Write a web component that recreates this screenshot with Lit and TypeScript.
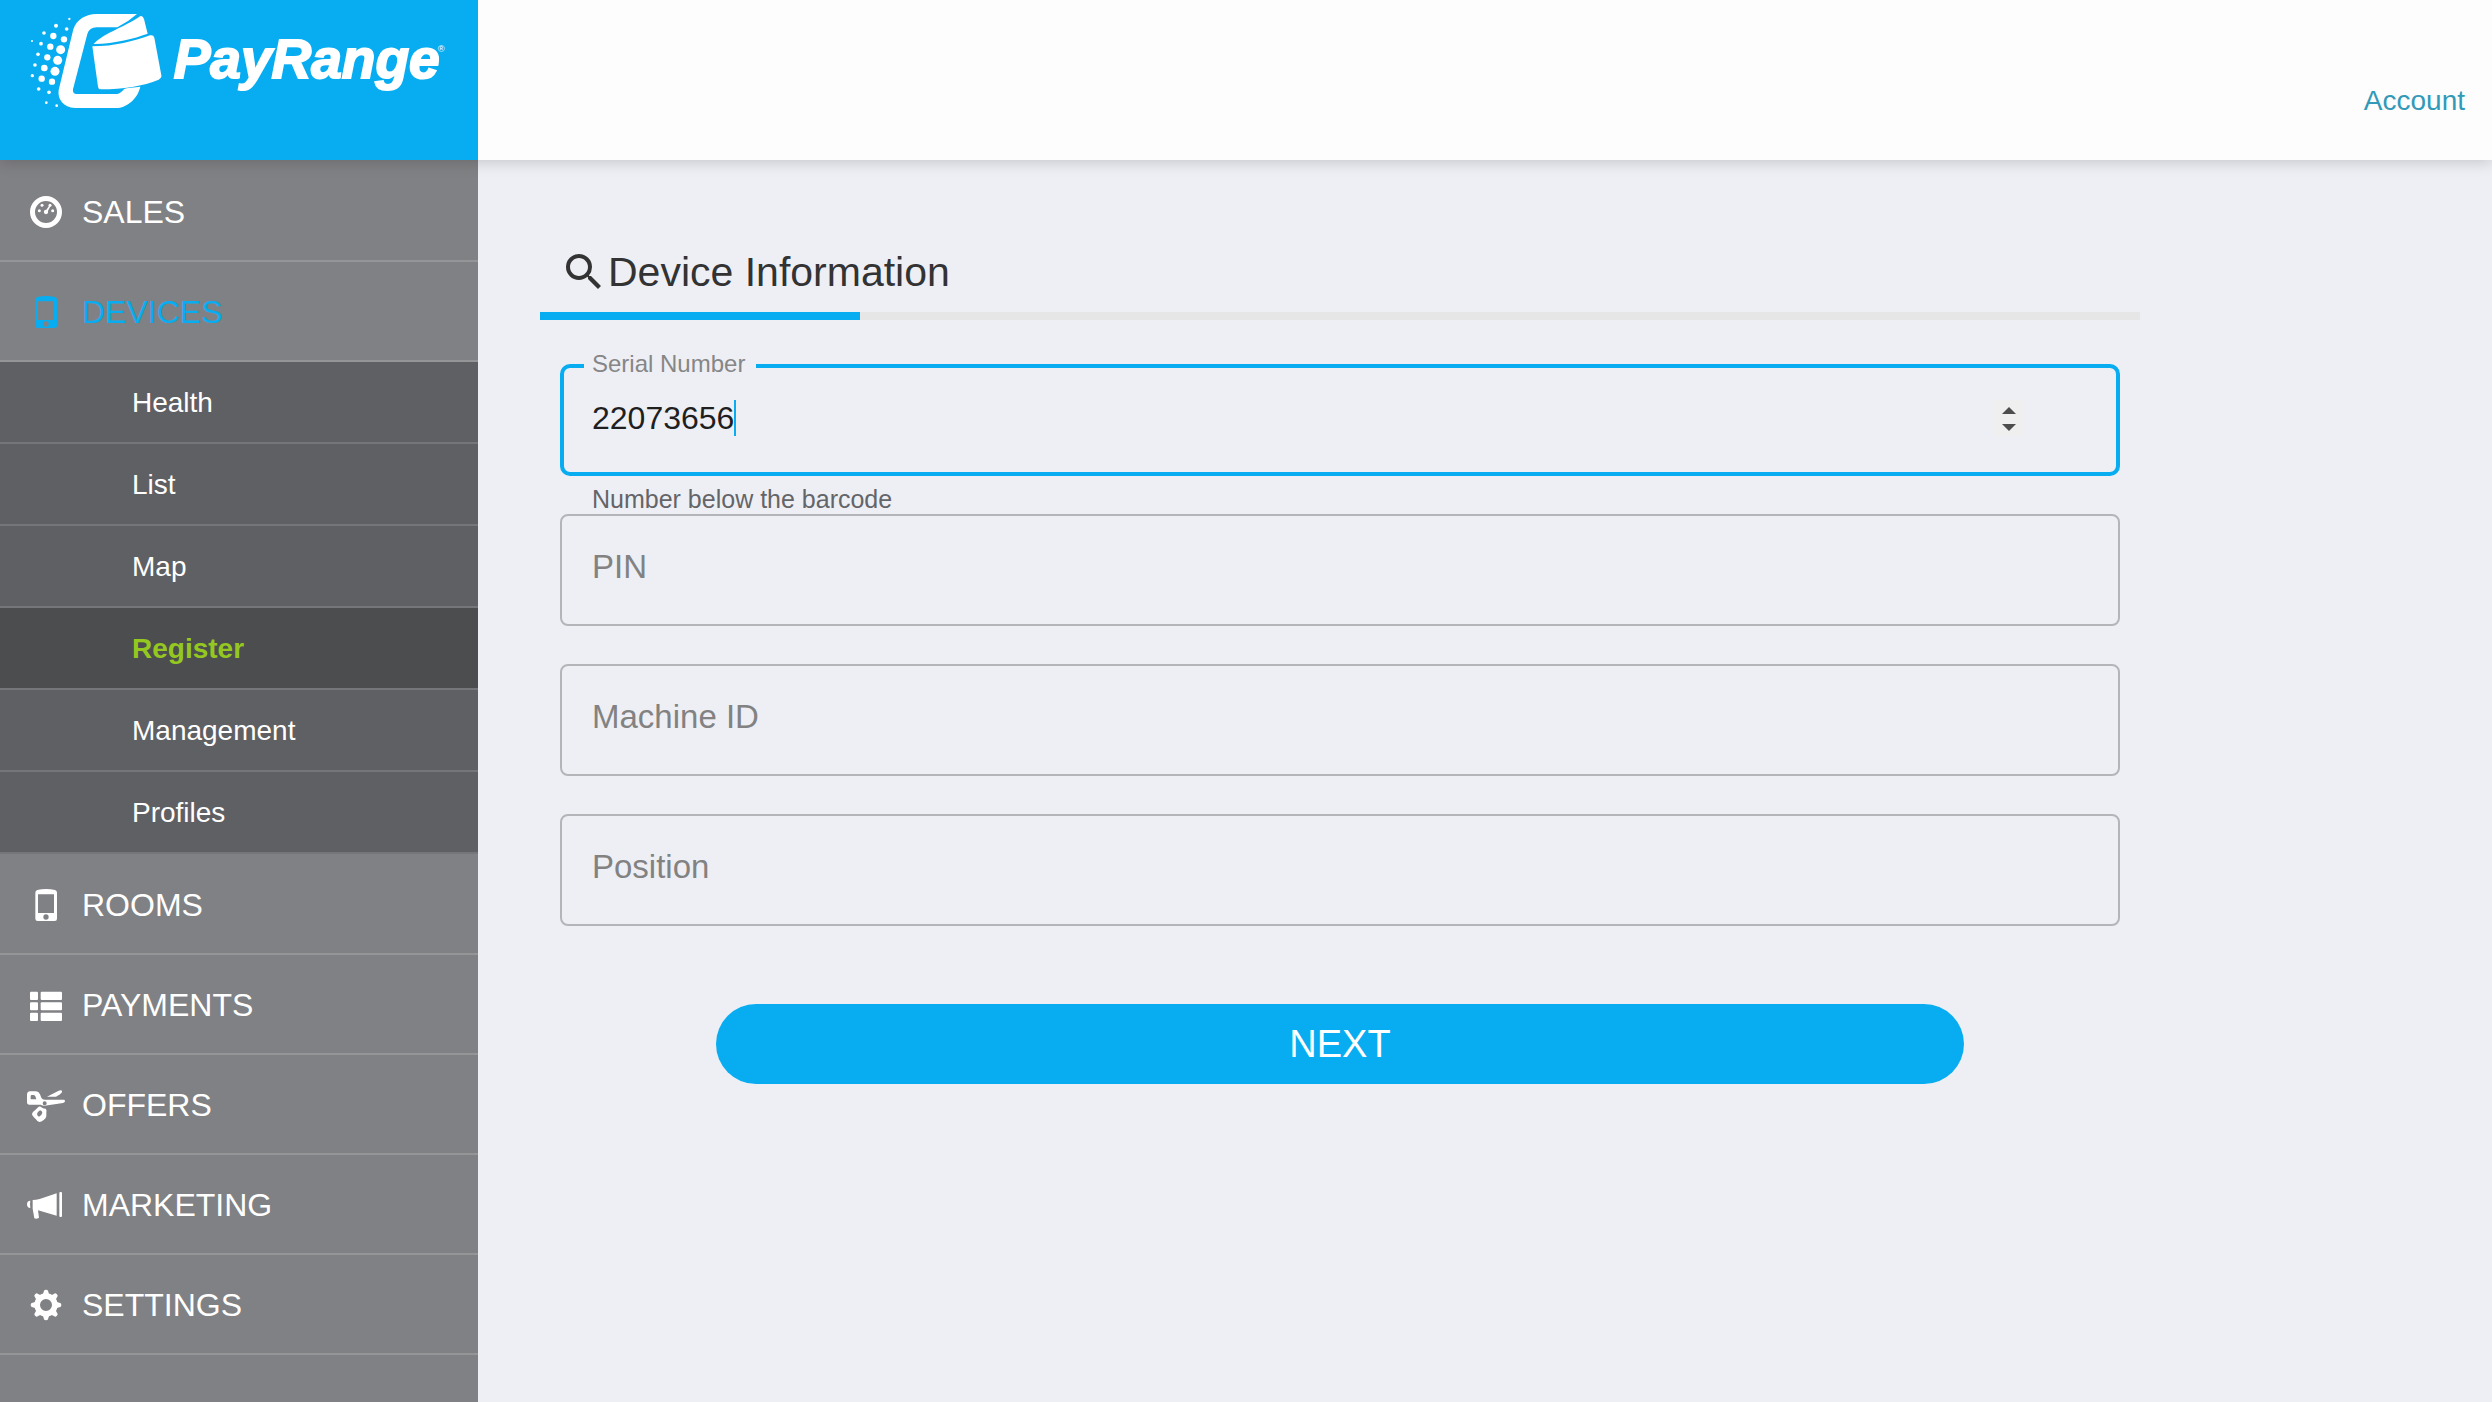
import { LitElement, html, css, svg, nothing } from "lit";
import { customElement, property } from "lit/decorators.js";
import { classMap } from "lit/directives/class-map.js";

const gearTeeth = [0, 45, 90, 135, 180, 225, 270, 315];

const icons: Record<string, unknown> = {
  dashboard: svg`
    <path fill-rule="evenodd" d="M60 15a48 48 0 1 0 0 96a48 48 0 1 0 0-96zM60 30a33 33 0 1 1 0 66a33 33 0 1 1 0-66z"/>
    <circle cx="60" cy="63" r="6.5"/>
    <circle cx="48" cy="43" r="4.5"/>
    <circle cx="40" cy="59" r="4.5"/>
    <circle cx="80" cy="59" r="4.5"/>
    <circle cx="72" cy="43" r="4.5"/>
    <path d="M58 61L71 42L74 44L63 65z"/>`,
  phone: svg`
    <path fill-rule="evenodd" d="M28 26Q28 20 34 18Q46 15 60 15Q75 15 87 18Q93 20 93 26V104Q93 111 86 111H35Q28 111 28 104zM36 31V87H84V31zM60 91a8 8 0 1 0 0 16a8 8 0 1 0 0-16z"/>`,
  list: svg`
    <rect x="12" y="23" width="24" height="25" rx="3"/><rect x="44" y="23" width="64" height="25" rx="3"/>
    <rect x="12" y="55" width="24" height="24" rx="3"/><rect x="44" y="55" width="64" height="24" rx="3"/>
    <rect x="12" y="86" width="24" height="25" rx="3"/><rect x="44" y="86" width="64" height="25" rx="3"/>`,
  scissors: svg`
    <path fill-rule="evenodd" d="M12 22H30Q38 22 42 31L46 41Q49 47 56 47H113Q117 47 117 51Q117 56 111 57L66 64Q50 67 44 62H10Q3 62 3 54V33Q3 22 12 22zM17 33Q14 33 14 37V46H31L28 37Q26 33 22 33zM56 52a6 6 0 1 0 0 12a6 6 0 1 0 0-12z"/>
    <path d="M63 38L98 20Q105 17 108 20Q110 25 102 31L90 38z"/>
    <path fill-rule="evenodd" d="M38 68Q44 67 48 71Q54 74 59 74Q63 77 61 87V97Q60 103 53 108Q46 114 40 114Q34 113 29 105Q18 95 18 90Q19 84 27 79zM42 79Q34 84 33 90Q34 97 39 98Q48 93 49 86Q48 80 42 79z"/>`,
  bullhorn: svg`
    <path d="M20 48Q30 48 41 45L92 28V95L36 79L39 101Q32 106 25 103L20 74z"/>
    <rect x="100" y="24" width="8" height="75" rx="3"/>
    <path d="M13 50Q3 50 3 61Q3 72 13 72Q11 61 13 50z"/>`,
  gear: svg`
    <path fill-rule="evenodd" d="M60 28a35 35 0 1 0 0 70a35 35 0 1 0 0-70zM60 45a18 18 0 1 1 0 36a18 18 0 1 1 0-36z"/>
    ${gearTeeth.map(
      (a) => svg`<path transform="rotate(${a} 60 63)" d="M50 34L54 20Q55 17 60 17Q65 17 66 20L70 34z"/>`,
    )}`,
};

@customElement("nav-icon")
class NavIcon extends LitElement {
  static styles = css`
    :host {
      display: block;
      flex: none;
      width: 40px;
      height: 40px;
    }
    .glyph {
      display: block;
      fill: currentColor;
    }
  `;

  @property() name = "";

  render() {
    return html`<svg class="glyph" width="40" height="40" viewBox="0 0 120 120" aria-hidden="true">
      ${icons[this.name]}
    </svg>`;
  }
}

// Halftone dots on the left of the emblem: centre x, centre y, radius.
const dots = [
  [96, 123, 3], [132, 99, 5.5], [168, 77, 6], [208, 57, 3.5], [200, 87, 5.5], [160, 108, 9.5],
  [123, 131, 5.5], [192, 118, 9.5], [151, 140, 9.5], [114, 163, 5.5], [182, 149, 13.5],
  [142, 172, 9.5], [105, 195, 5.5], [173, 181, 13.5], [133, 204, 10], [97, 227, 5],
  [165, 214, 13.5], [125, 236, 9.5], [156, 245, 9.5], [116, 267, 5.5], [147, 277, 5.5],
  [139, 308, 4], [170, 317, 4],
];

@customElement("brand-logo")
class BrandLogo extends LitElement {
  static styles = css`
    :host {
      display: block;
    }
    .logo {
      display: block;
      fill: #fff;
    }
    .word {
      font: italic bold 165px "Liberation Sans", Arial, sans-serif;
      stroke: #fff;
      stroke-width: 6px;
    }
    .mark {
      font: 28px "Liberation Sans", sans-serif;
    }
  `;

  render() {
    return html`<svg class="logo" width="460" height="120" viewBox="0 0 1380 360" role="img" aria-label="PayRange">
      ${dots.map(([x, y, r]) => svg`<circle cx=${x} cy=${y} r=${r} />`)}
      <path d="M288 42H411Q384 66 352 82H290Q268 82 262 102L219 268Q217 282 230 282H350Q360 282 372 268Q374 266 380 265L421 260C413 296 380 324 348 324H225C190 322 172 298 176 270L220 88C230 57 260 42 288 42z"/>
      <path d="M277 139C345 139 400 124 450 106Q461 104 463 113L484 226Q486 233 476 239C430 258 370 268 302 268Q295 268 294 260z"/>
      <path d="M281 132C310 100 385 76 420 49Q428 46 432 57L443 101C400 116 350 130 281 132z"/>
      <text class="word" x="521" y="235">PayRange</text>
      <text class="mark" x="1313" y="156">®</text>
    </svg>`;
  }
}

interface NavEntry {
  label: string;
  icon: string;
  active?: boolean;
  children?: { label: string; active?: boolean }[];
}

const nav: NavEntry[] = [
  { label: "SALES", icon: "dashboard" },
  {
    label: "DEVICES",
    icon: "phone",
    active: true,
    children: [
      { label: "Health" },
      { label: "List" },
      { label: "Map" },
      { label: "Register", active: true },
      { label: "Management" },
      { label: "Profiles" },
    ],
  },
  { label: "ROOMS", icon: "phone" },
  { label: "PAYMENTS", icon: "list" },
  { label: "OFFERS", icon: "scissors" },
  { label: "MARKETING", icon: "bullhorn" },
  { label: "SETTINGS", icon: "gear" },
];

const emptyFields = [
  { id: "pin", label: "PIN" },
  { id: "machine", label: "Machine ID" },
  { id: "position", label: "Position" },
];

@customElement("app-root")
class AppRoot extends LitElement {
  static styles = css`
    :host {
      --blue: #07adf0;
      --page: #eeeff5;
      display: flex;
      flex-direction: column;
      min-height: 100vh;
      background: var(--page);
      font-family: "Liberation Sans", Arial, sans-serif;
      color: #333;
    }
    * {
      box-sizing: border-box;
    }
    a {
      text-decoration: none;
      color: inherit;
    }
    ul {
      list-style: none;
      margin: 0;
      padding: 0;
    }
    .header {
      display: flex;
      height: 160px;
      background: #fdfdfd;
      box-shadow: 0 2px 14px rgba(0, 0, 0, 0.18);
      z-index: 1;
    }
    .brand {
      width: 478px;
      background: var(--blue);
    }
    .account {
      margin: 85px 27px 0 auto;
      font-size: 28px;
      line-height: 32px;
      color: #3399b8;
    }
    .body {
      display: flex;
      flex: 1;
    }
    .sidebar {
      flex: none;
      width: 478px;
      padding-top: 2px;
      background: #808184;
      color: #fff;
    }
    .item {
      display: flex;
      align-items: center;
      gap: 16px;
      height: 100px;
      padding: 0 26px;
      border-bottom: 2px solid #949597;
      font-size: 32px;
    }
    .item.active {
      color: var(--blue);
    }
    .text {
      padding-top: 3px;
    }
    .sub {
      margin-bottom: 1px;
      background: #5f6063;
      font-size: 28px;
    }
    .subitem {
      display: flex;
      align-items: center;
      height: 82px;
      padding: 2px 0 0 132px;
      border-bottom: 2px solid #757679;
    }
    .subitem.active {
      background: #4c4d4f;
      color: #94c820;
      font-weight: bold;
    }
    .main {
      flex: 1;
      padding: 88px 62px;
    }
    .panel {
      max-width: 1600px;
    }
    .title {
      display: flex;
      align-items: center;
      height: 48px;
      margin: 0 20px 16px;
      font-size: 41px;
      font-weight: normal;
    }
    .steps {
      display: block;
      appearance: none;
      width: 100%;
      height: 8px;
      border: 0;
      background: #e6e6e6;
    }
    .steps::-webkit-progress-bar {
      background: #e6e6e6;
    }
    .steps::-webkit-progress-value {
      background: var(--blue);
    }
    .form {
      display: grid;
      padding: 44px 20px 0;
    }
    .field {
      display: grid;
      height: 112px;
      border: 2px solid #b4b5b9;
      border-radius: 8px;
      margin-bottom: 38px;
    }
    .field > * {
      grid-area: 1 / 1;
    }
    .label {
      align-self: center;
      padding: 0 30px 6px;
      font-size: 33px;
      line-height: 38px;
      color: #828282;
    }
    .input {
      border: 0;
      outline: 0;
      padding: 0 30px;
      background: none;
      font: inherit;
      font-size: 32px;
      color: #1f1f1f;
    }
    .field.focused {
      position: relative;
      display: flex;
      align-items: center;
      border: 4px solid var(--blue);
      border-radius: 10px;
      margin-bottom: 0;
      padding: 0 92px 4px 28px;
    }
    .focused .label {
      position: absolute;
      top: -18px;
      left: 20px;
      padding: 0 11px 0 8px;
      background: var(--page);
      font-size: 24px;
      line-height: 28px;
      color: #868686;
    }
    .focused .input {
      appearance: textfield;
      field-sizing: content;
      padding: 0;
      caret-color: transparent;
    }
    .input::-webkit-inner-spin-button {
      appearance: none;
      margin: 0;
    }
    .caret {
      width: 2px;
      height: 36px;
      background: var(--blue);
    }
    .stepper {
      display: flex;
      flex-direction: column;
      width: 30px;
      margin-left: auto;
      background: #efefef;
    }
    .step {
      display: block;
      height: 18px;
      padding: 0;
      border: 0;
      background: none;
    }
    .arrow {
      display: block;
      fill: #4d4d4d;
    }
    .hint {
      height: 38px;
      margin: 0;
      padding: 9px 32px 0;
      font-size: 25px;
      line-height: 29px;
      color: #646568;
    }
    .next {
      justify-self: center;
      width: 80%;
      height: 80px;
      margin-top: 40px;
      border: 0;
      border-radius: 40px;
      background: var(--blue);
      color: #fff;
      font: inherit;
      font-size: 38px;
    }
  `;

  private renderEntry(entry: NavEntry) {
    return html`<li>
      <a class=${classMap({ item: true, active: !!entry.active })} href="#">
        <nav-icon name=${entry.icon}></nav-icon><span class="text">${entry.label}</span>
      </a>
      ${entry.children
        ? html`<ul class="sub">
            ${entry.children.map(
              (c) => html`<li>
                <a class=${classMap({ subitem: true, active: !!c.active })} href="#">${c.label}</a>
              </li>`,
            )}
          </ul>`
        : nothing}
    </li>`;
  }

  render() {
    return html`
      <header class="header">
        <a class="brand" href="#"><brand-logo></brand-logo></a>
        <a class="account" href="#">Account</a>
      </header>
      <div class="body">
        <nav class="sidebar">
          <ul>
            ${nav.map((entry) => this.renderEntry(entry))}
          </ul>
        </nav>
        <main class="main">
          <div class="panel">
            <h1 class="title">
              <svg width="48" height="48" viewBox="0 0 24 24" fill="#333" aria-hidden="true">
                <path d="M15.5 14h-.79l-.28-.27A6.471 6.471 0 0 0 16 9.5 6.5 6.5 0 1 0 9.5 16c1.61 0 3.09-.59 4.23-1.57l.27.28v.79l5 4.99L20.49 19l-4.99-5zm-6 0C7.01 14 5 11.99 5 9.5S7.01 5 9.5 5 14 7.01 14 9.5 11.99 14 9.5 14z"/>
              </svg>
              Device Information
            </h1>
            <progress class="steps" value="1" max="5" aria-label="Registration progress"></progress>
            <form class="form">
              <div class="field focused">
                <label class="label" for="serial">Serial Number</label>
                <input class="input" id="serial" type="number" value="22073656" aria-describedby="serial-hint" />
                <span class="caret"></span>
                <span class="stepper">
                  <button class="step" type="button" aria-label="Increase">
                    <svg class="arrow" width="30" height="18" viewBox="0 0 30 18"><path d="M15 7L22 14H8z"/></svg>
                  </button>
                  <button class="step" type="button" aria-label="Decrease">
                    <svg class="arrow" width="30" height="18" viewBox="0 0 30 18"><path d="M15 13L8 6H22z"/></svg>
                  </button>
                </span>
              </div>
              <p class="hint" id="serial-hint">Number below the barcode</p>
              ${emptyFields.map(
                (f) => html`<div class="field">
                  <label class="label" for=${f.id}>${f.label}</label>
                  <input class="input" id=${f.id} type="text" />
                </div>`,
              )}
              <button class="next" type="button">NEXT</button>
            </form>
          </div>
        </main>
      </div>
    `;
  }
}
